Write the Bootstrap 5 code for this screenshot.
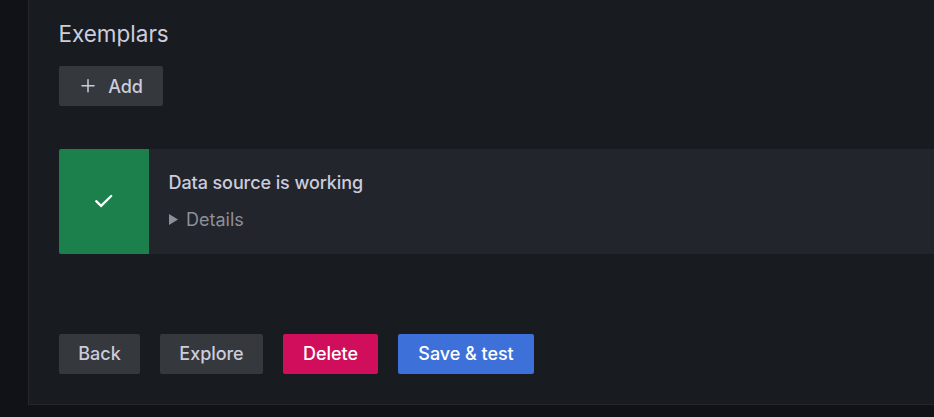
<!DOCTYPE html>
<html lang="en" data-bs-theme="dark">
<head>
<meta charset="utf-8">
<title>Data source settings</title>
<link href="https://cdn.jsdelivr.net/npm/bootstrap@5.3.0/dist/css/bootstrap.min.css" rel="stylesheet">
<style>
body{background:#111217;color:#ccccdc;font-family:Inter,sans-serif;font-size:18px;height:417px;overflow:hidden}
.settings-panel{margin-left:28px;height:405px;background:#181b1f;border-left:1px solid #24262c;border-bottom:1px solid #24262c;padding:20px 0 0 30px}
.section-title{font-size:22.5px;line-height:28px;font-weight:400;color:#ccccdc;margin:0 0 18px -.6px}
.settings-panel .btn{--bs-btn-padding-y:0;--bs-btn-padding-x:0;--bs-btn-border-width:0;--bs-btn-border-radius:2px;--bs-btn-font-size:18px;--bs-btn-font-weight:500;height:40px;line-height:40px;letter-spacing:-.05px}
.btn-plain{--bs-btn-bg:#35383d;--bs-btn-color:#ccccdc}
.btn-remove{--bs-btn-bg:#d10e5c;--bs-btn-color:#fff;width:95px}
.btn-save{--bs-btn-bg:#3d71d9;--bs-btn-color:#fff;width:136px}
.settings-panel .btn-add{width:104px;padding-top:2px}
.btn-back{width:81px}
.btn-explore{width:103px}
.add-icon{margin-right:11px}
.status-box{height:105px;margin-top:43px;background:#22252b;border-radius:2px 0 0 2px}
.status-icon{width:90px;background:#1c804c;border-radius:2px 0 0 2px}
.status-text{padding:20px 20px 20px 19.5px}
.status-title{font-size:18px;font-weight:500;line-height:27px;letter-spacing:-.09px}
.status-more{color:#8e8f9a;line-height:27px;margin-top:10px}
.more-arrow{margin-right:8.5px}
.actions{gap:20px;margin-top:80px}
</style>
<script src="https://cdn.jsdelivr.net/npm/bootstrap@5.3.0/dist/js/bootstrap.bundle.min.js"></script>
</head>
<body>
<main class="settings-panel">
<h2 class="section-title">Exemplars</h2>
<button class="btn btn-plain btn-add d-flex align-items-center justify-content-center" type="button"><svg class="add-icon" width="18" height="20" viewBox="0 0 18 20" fill="none" stroke="currentColor" stroke-width="1.5" stroke-linecap="round"><path d="M9 2.7v12M3 8.7h12"/></svg>Add</button>
<section class="status-box d-flex">
<div class="status-icon d-flex align-items-center justify-content-center"><svg width="22" height="22" viewBox="0 0 22 22" fill="none" stroke="#fff" stroke-width="2.3" stroke-linecap="round" stroke-linejoin="miter"><path d="M3.2 10.2 8.1 14.8 18.2 5"/></svg></div>
<div class="status-text"><div class="status-title">Data source is working</div>
<div class="status-more d-flex align-items-center"><svg class="more-arrow" width="9" height="11" viewBox="0 0 9 11" fill="currentColor"><path d="M0 0v11l9-5.5z"/></svg>Details</div></div>
</section>
<div class="actions d-flex">
<button class="btn btn-plain btn-back" type="button">Back</button>
<button class="btn btn-plain btn-explore" type="button">Explore</button>
<button class="btn btn-remove" type="button">Delete</button>
<button class="btn btn-save" type="button">Save &amp; test</button>
</div>
</main>
</body>
</html>
